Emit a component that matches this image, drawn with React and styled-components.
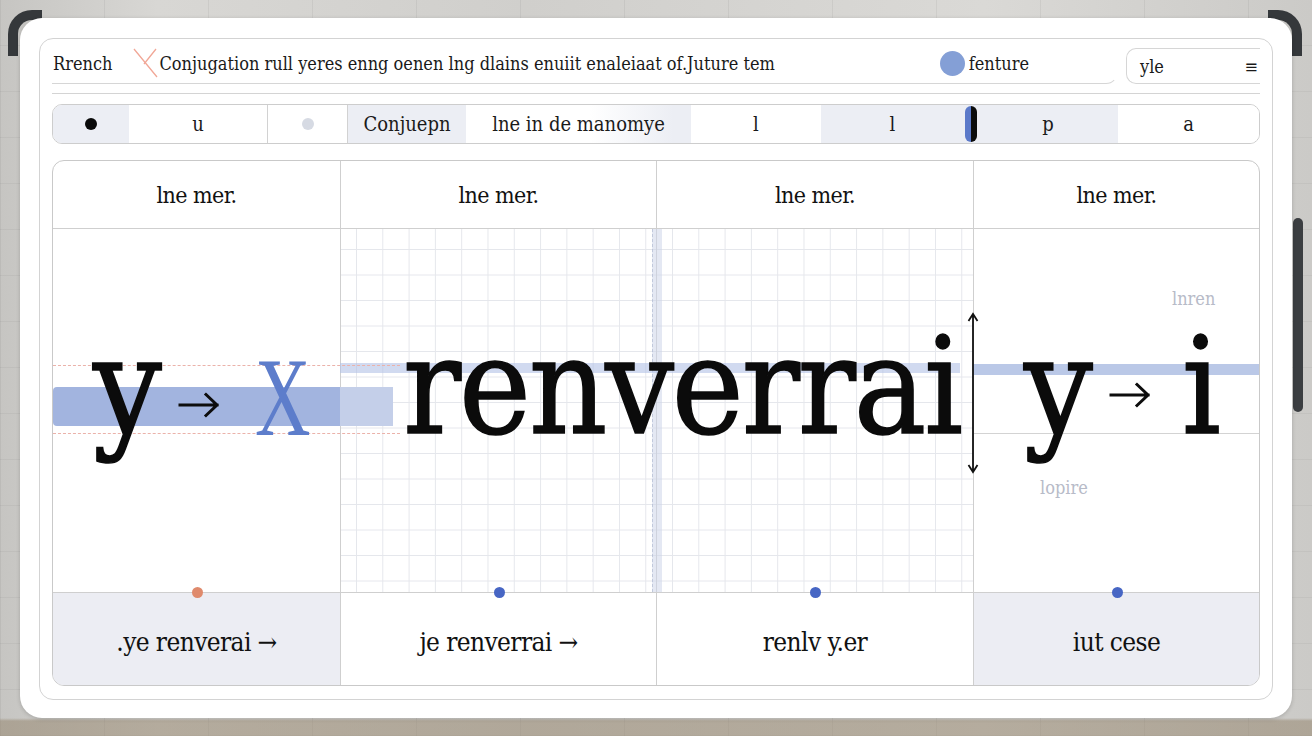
import React from "react";
import styled, { createGlobalStyle } from "styled-components";

const serif = `"DejaVu Serif", "Liberation Serif", serif`;
const line = "#cfcfcf";

const GlobalStyle = createGlobalStyle`
  html, body { margin: 0; padding: 0; }
  body { width: 1312px; height: 736px; overflow: hidden; font-family: ${serif}; }
  *, *::before, *::after { box-sizing: border-box; }
`;

const Stage = styled.div`
  position: relative;
  width: 1312px;
  height: 736px;
  padding: 18px 20px;
  background:
    linear-gradient(180deg, transparent 0 718px, rgba(150, 135, 112, 0.55) 721px, rgba(150, 135, 112, 0.55) 736px),
    repeating-linear-gradient(90deg, rgba(0, 0, 0, 0.05) 0 1px, transparent 1px 104px),
    repeating-linear-gradient(0deg, rgba(0, 0, 0, 0.04) 0 1px, transparent 1px 46px),
    linear-gradient(90deg, #c6c5c2, #d8d7d4 12%, #d0cfcc 40%, #dad9d6 75%, #cbcac7);
`;

const Bracket = styled.div`
  position: absolute;
  top: 10px;
  width: 34px;
  height: 46px;
  border-top: 10px solid #35383b;
  ${(p) =>
    p.$side === "left"
      ? "left: 8px; border-left: 10px solid #35383b; border-top-left-radius: 24px;"
      : "right: 10px; border-right: 10px solid #35383b; border-top-right-radius: 24px;"}
`;

const ScrollThumb = styled.div`
  position: absolute;
  left: 1293px;
  top: 218px;
  width: 10px;
  height: 194px;
  border-radius: 5px;
  background: #3b3e41;
`;

const Card = styled.div`
  position: relative;
  z-index: 1;
  height: 100%;
  background: #fff;
  border-radius: 22px;
  padding: 20px 19px 18px;
  box-shadow: 0 1px 4px rgba(0, 0, 0, 0.18);
`;

const Panel = styled.div`
  height: 100%;
  border: 1px solid #d3d3d3;
  border-radius: 14px;
  padding: 0 12px 13px;
  display: flex;
  flex-direction: column;
`;

const HeaderRow = styled.div`
  display: flex;
  height: 45px;
  flex: none;
`;

const HeaderMain = styled.div`
  flex: 1;
  display: flex;
  align-items: center;
  padding: 4px 88px 0 1px;
  border-bottom: 1px solid #d6d6d6;
  border-right: 1px solid transparent;
  border-bottom-right-radius: 12px;
  font-size: 18px;
  font-stretch: condensed;
  color: #1a1a1a;
  white-space: nowrap;
`;

const Lang = styled.span``;

const CrossMark = styled.svg`
  margin-left: 20px;
  flex: none;
`;

const Title = styled.span`
  margin-left: 1px;
`;

const Spacer = styled.div`
  flex: 1;
`;

const BlueDot = styled.span`
  width: 25px;
  height: 25px;
  border-radius: 50%;
  background: #849fd6;
  margin-right: 4px;
  flex: none;
`;

const HeaderSide = styled.div`
  width: 134px;
  margin: 9px 0 0 8px;
  display: flex;
  align-items: center;
  justify-content: space-between;
  padding: 0 2px 0 13px;
  border: 1px solid #d6d6d6;
  border-right: none;
  border-radius: 10px 0 0 10px;
  font-size: 18px;
  font-stretch: condensed;
  color: #1a1a1a;
`;

const Separator = styled.div`
  flex: none;
  height: 1px;
  margin-top: 9px;
  background: #d4d4d4;
`;

const Tabs = styled.div`
  flex: none;
  margin-top: 10px;
  height: 40px;
  display: flex;
  border: 1px solid #cdcdcd;
  border-radius: 10px;
  overflow: hidden;
`;

const Tab = styled.div`
  flex: ${(p) => (p.$w ? `0 0 ${p.$w}px` : "1")};
  display: flex;
  align-items: center;
  justify-content: center;
  background: ${(p) =>
    p.$tone === "gray" ? "#eceef4" : p.$tone === "fade" ? "linear-gradient(90deg, #fff 55%, #eceef4 92%)" : "#fff"};
  border-right: ${(p) => (p.$divider ? "1px solid #d2d2d2" : "none")};
  font-size: 20px;
  font-stretch: condensed;
  color: #1a1a1a;
`;

const TabDot = styled.span`
  width: 12px;
  height: 12px;
  border-radius: 50%;
  background: ${(p) => p.$color};
`;

const Pill = styled.div`
  flex: 0 0 14px;
  display: flex;
  padding: 1px 1px;
  background: #eceef4;
`;

const PillHalf = styled.span`
  flex: 1;
  background: ${(p) => p.$color};
  border-radius: ${(p) => (p.$left ? "6px 0 0 6px" : "0 6px 6px 0")};
`;

const Board = styled.div`
  flex: none;
  margin-top: 16px;
  height: 526px;
  border: 1px solid #c9c9c9;
  border-radius: 12px;
  overflow: hidden;
  display: grid;
  grid-template-columns: 287px 316px 317px 1fr;
  grid-template-rows: 68px 363px 93px;
`;

const HeadCell = styled.div`
  grid-row: 1;
  display: flex;
  align-items: center;
  justify-content: center;
  padding-top: 1px;
  border-bottom: 1px solid ${line};
  border-left: ${(p) => (p.$first ? "none" : `1px solid ${line}`)};
  font-size: 23px;
  font-stretch: condensed;
  color: #111;
  letter-spacing: -0.6px;
`;

const BodyCell = styled.div`
  grid-row: 2;
  grid-column: ${(p) => p.$col};
  border-left: ${(p) => (p.$col === 1 ? "none" : `1px solid ${line}`)};
  background-color: #fff;
  ${(p) =>
    p.$grid
      ? `background-image:
          linear-gradient(90deg, #e5e7ec 1px, transparent 1px),
          linear-gradient(0deg, #e5e7ec 1px, transparent 1px);
        background-size: 26.3px 25.5px;
        background-position: 15px 21px;`
      : ""}
`;

const FootCell = styled.div`
  grid-row: 3;
  position: relative;
  display: flex;
  align-items: center;
  justify-content: center;
  padding-top: 5px;
  border-top: 1px solid ${line};
  border-left: ${(p) => (p.$first ? "none" : `1px solid ${line}`)};
  background: ${(p) => (p.$shade ? "#ecedf3" : "#fff")};
  font-size: 26px;
  font-stretch: condensed;
  color: #111;
  letter-spacing: -0.6px;
`;

const Marker = styled.span`
  position: absolute;
  top: -6px;
  left: 50%;
  width: 11px;
  height: 11px;
  margin-left: -5px;
  border-radius: 50%;
  background: ${(p) => p.$color};
`;

const Diagram = styled.div`
  grid-row: 2;
  grid-column: 1 / -1;
  position: relative;
  pointer-events: none;
`;

const Band = styled.div`
  position: absolute;
  left: ${(p) => p.$x}px;
  top: ${(p) => p.$y}px;
  width: ${(p) => p.$w}px;
  height: ${(p) => p.$h}px;
  background: ${(p) => p.$color};
  border-radius: ${(p) => p.$radius || "0"};
`;

const GuideLine = styled.div`
  position: absolute;
  left: ${(p) => p.$x}px;
  top: ${(p) => p.$y}px;
  width: ${(p) => p.$w}px;
  border-top: 1px ${(p) => p.$style || "solid"} ${(p) => p.$color};
`;

const SplitBand = styled.div`
  position: absolute;
  left: 599px;
  top: 0;
  width: 10px;
  height: 100%;
  background: rgba(205, 213, 234, 0.55);
  border-left: 1px dashed rgba(170, 180, 205, 0.6);
`;

const Glyph = styled.span`
  position: absolute;
  left: ${(p) => p.$x}px;
  top: ${(p) => p.$y}px;
  font-family: ${serif};
  font-stretch: condensed;
  font-size: ${(p) => p.$size}px;
  line-height: 0.75;
  letter-spacing: ${(p) => p.$ls || 0}px;
  color: #0b0b0b;
  -webkit-text-stroke: 1.6px #0b0b0b;
  white-space: nowrap;
`;

const BlueX = styled.span`
  position: absolute;
  left: 202px;
  top: 111px;
  font-family: "Liberation Serif", serif;
  font-size: 113px;
  line-height: 1;
  color: #5d7dcb;
  transform: scaleX(0.68);
  transform-origin: left top;
`;

const Note = styled.span`
  position: absolute;
  left: ${(p) => p.$x}px;
  top: ${(p) => p.$y}px;
  font-size: 18px;
  font-stretch: condensed;
  line-height: 1;
  color: #b7bbc8;
`;

const Drawing = styled.svg`
  position: absolute;
  left: ${(p) => p.$x}px;
  top: ${(p) => p.$y}px;
  overflow: visible;
`;

const Arrow = ({ x, y }) => (
  <Drawing $x={x} $y={y} width="41" height="26" viewBox="0 0 41 26">
    <path d="M1 13H38M27 2.5L38 13L27 23.5" fill="none" stroke="#0d0d0d" strokeWidth="3" strokeLinecap="square" />
  </Drawing>
);

const heads = ["lne mer.", "lne mer.", "lne mer.", "lne mer."];
const foots = [
  { text: ".ye renverai →", shade: true, dot: "#df8a6c" },
  { text: "je renverrai →", shade: false, dot: "#4766c4" },
  { text: "renlv y.er", shade: false, dot: "#4766c4" },
  { text: "iut cese", shade: true, dot: "#4766c4" },
];

export default function App() {
  return (
    <Stage>
      <GlobalStyle />
      <Bracket $side="left" />
      <Bracket $side="right" />
      <ScrollThumb />
      <Card>
        <Panel>
          <HeaderRow>
            <HeaderMain>
              <Lang>Rrench</Lang>
              <CrossMark width="26" height="30" viewBox="0 0 26 30">
                <path d="M2 1L25 29M24 1L12 16" fill="none" stroke="#f1a797" strokeWidth="1.3" />
              </CrossMark>
              <Title>Conjugation rull yeres enng oenen lng dlains enuiit enaleiaat of.Juture tem</Title>
              <Spacer />
              <BlueDot />
              <span>fenture</span>
            </HeaderMain>
            <HeaderSide>
              <span>yle</span>
              <span>≡</span>
            </HeaderSide>
          </HeaderRow>
          <Separator />
          <Tabs>
            <Tab $w={76} $tone="gray">
              <TabDot $color="#0a0a0a" />
            </Tab>
            <Tab $w={139} $divider>u</Tab>
            <Tab $w={80} $divider>
              <TabDot $color="#d6dae3" />
            </Tab>
            <Tab $w={118} $tone="gray">Conjuepn</Tab>
            <Tab $w={225} $tone="fade">lne in de manomye</Tab>
            <Tab $w={130}>l</Tab>
            <Tab $w={143} $tone="gray">l</Tab>
            <Pill>
              <PillHalf $color="#5b79c9" $left />
              <PillHalf $color="#0c0c0c" />
            </Pill>
            <Tab $w={140} $tone="gray">p</Tab>
            <Tab>a</Tab>
          </Tabs>
          <Board>
            {heads.map((h, i) => (
              <HeadCell key={i} $first={i === 0}>{h}</HeadCell>
            ))}
            <BodyCell $col={1} />
            <BodyCell $col={2} $grid />
            <BodyCell $col={3} $grid />
            <BodyCell $col={4} />
            <Diagram>
              <SplitBand />
              <Band $x={0} $y={158} $w={287} $h={39} $color="#a2b4df" $radius="4px 0 0 4px" />
              <Band $x={287} $y={158} $w={53} $h={39} $color="#c4cfe9" />
              <Band $x={287} $y={134} $w={620} $h={10} $color="rgba(178,194,230,0.6)" />
              <Band $x={920} $y={135} $w={287} $h={11} $color="#bac8e7" />
              <GuideLine $x={0} $y={136} $w={347} $style="dashed" $color="#ebb2aa" />
              <GuideLine $x={0} $y={204} $w={347} $style="dashed" $color="#ebb2aa" />
              <GuideLine $x={920} $y={204} $w={287} $color="#d3d3d3" />
              <Glyph $x={40} $y={107} $size={135}>y</Glyph>
              <Arrow x={126} y={163} />
              <BlueX>X</BlueX>
              <Glyph $x={350} $y={107} $size={135} $ls={-2}>renverrai</Glyph>
              <Drawing $x={914} $y={84} width="12" height="160" viewBox="0 0 12 160">
                <path d="M6 1V159M1.5 8L6 1L10.5 8M1.5 152L6 159L10.5 152" fill="none" stroke="#111" strokeWidth="1.8" />
              </Drawing>
              <Glyph $x={971} $y={107} $size={135}>y</Glyph>
              <Arrow x={1057} y={153} />
              <Glyph $x={1129} $y={107} $size={135}>i</Glyph>
              <Note $x={1119} $y={61}>lnren</Note>
              <Note $x={987} $y={250}>lopire</Note>
            </Diagram>
            {foots.map((f, i) => (
              <FootCell key={i} $first={i === 0} $shade={f.shade}>
                <Marker $color={f.dot} />
                {f.text}
              </FootCell>
            ))}
          </Board>
        </Panel>
      </Card>
    </Stage>
  );
}
